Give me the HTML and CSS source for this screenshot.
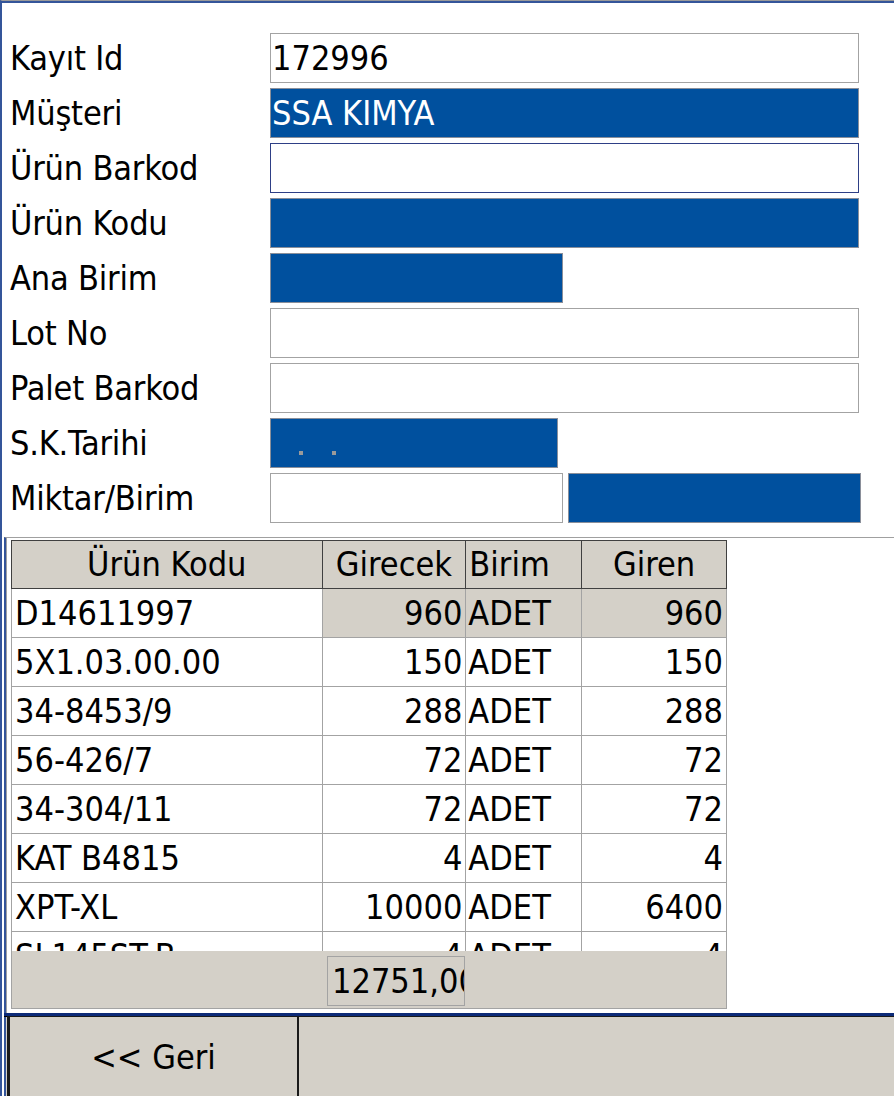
FILE: index.html
```html
<!DOCTYPE html>
<html lang="tr">
<head>
<meta charset="utf-8">
<title>Mal Kabul</title>
<link rel="stylesheet" href="styles.css">
</head>
<body>
<div class="window">
  <div class="form">
    <div class="label">Kayıt Id</div>
    <div class="field"><div class="box full">172996</div></div>

    <div class="label">Müşteri</div>
    <div class="field"><div class="box full blue">SSA KIMYA</div></div>

    <div class="label">Ürün Barkod</div>
    <div class="field"><div class="box full focus"></div></div>

    <div class="label">Ürün Kodu</div>
    <div class="field"><div class="box full blue"></div></div>

    <div class="label">Ana Birim</div>
    <div class="field"><div class="box half blue"></div></div>

    <div class="label">Lot No</div>
    <div class="field"><div class="box full"></div></div>

    <div class="label">Palet Barkod</div>
    <div class="field"><div class="box full"></div></div>

    <div class="label">S.K.Tarihi</div>
    <div class="field"><div class="box date blue"><span class="dot"></span><span class="dot"></span></div></div>

    <div class="label">Miktar/Birim</div>
    <div class="field pair"><div class="box half"></div><div class="box half blue"></div></div>
  </div>

  <div class="grid-panel">
    <div class="grid">
      <div class="grid-head">
        <div class="hc c1 center">Ürün Kodu</div>
        <div class="hc c2 center">Girecek</div>
        <div class="hc c3">Birim</div>
        <div class="hc c4 center">Giren</div>
      </div>
      <div class="grid-body">
        <div class="row sel">
          <div class="cell c1">D14611997</div>
          <div class="cell c2 num">960</div>
          <div class="cell c3">ADET</div>
          <div class="cell c4 num">960</div>
        </div>
        <div class="row">
          <div class="cell c1">5X1.03.00.00</div>
          <div class="cell c2 num">150</div>
          <div class="cell c3">ADET</div>
          <div class="cell c4 num">150</div>
        </div>
        <div class="row">
          <div class="cell c1">34-8453/9</div>
          <div class="cell c2 num">288</div>
          <div class="cell c3">ADET</div>
          <div class="cell c4 num">288</div>
        </div>
        <div class="row">
          <div class="cell c1">56-426/7</div>
          <div class="cell c2 num">72</div>
          <div class="cell c3">ADET</div>
          <div class="cell c4 num">72</div>
        </div>
        <div class="row">
          <div class="cell c1">34-304/11</div>
          <div class="cell c2 num">72</div>
          <div class="cell c3">ADET</div>
          <div class="cell c4 num">72</div>
        </div>
        <div class="row">
          <div class="cell c1">KAT B4815</div>
          <div class="cell c2 num">4</div>
          <div class="cell c3">ADET</div>
          <div class="cell c4 num">4</div>
        </div>
        <div class="row">
          <div class="cell c1">XPT-XL</div>
          <div class="cell c2 num">10000</div>
          <div class="cell c3">ADET</div>
          <div class="cell c4 num">6400</div>
        </div>
        <div class="row">
          <div class="cell c1">SL145ST-B</div>
          <div class="cell c2 num">4</div>
          <div class="cell c3">ADET</div>
          <div class="cell c4 num">4</div>
        </div>
      </div>
      <div class="grid-foot">
        <div class="total">12751,00</div>
      </div>
    </div>
  </div>

  <div class="buttons">
    <div class="btn">&lt;&lt; Geri</div>
    <div class="btn-rest"></div>
  </div>
</div>
</body>
</html>
```

FILE: styles.css
```css
html, body {
  margin: 0;
  padding: 0;
  background: #ffffff;
}

body {
  width: 894px;
  height: 1096px;
  overflow: hidden;
  font-family: "DejaVu Sans Condensed", "DejaVu Sans", sans-serif;
  font-size: 34px;
  color: #000000;
}

.window {
  height: 1096px;
  box-sizing: border-box;
  border-top: 1px solid #9a9a9a;
  border-left: 2px solid #34559a;
  box-shadow: inset 0 2px 0 #34559a;
  display: flex;
  flex-direction: column;
}

/* ---------- form ---------- */
.form {
  display: grid;
  grid-template-columns: 268px 1fr;
  grid-auto-rows: 50px;
  row-gap: 5px;
  padding-top: 32px;
}

.label {
  padding-left: 8px;
  line-height: 50px;
  white-space: nowrap;
  letter-spacing: -0.2px;
}

.field {
  display: flex;
  gap: 5px;
}

.box {
  box-sizing: border-box;
  height: 50px;
  border: 1px solid #a3a3a3;
  background: #ffffff;
  line-height: 48px;
  padding-left: 1px;
  white-space: nowrap;
  overflow: hidden;
}

.box.full { width: 589px; }
.box.half { width: 293px; }
.box.date { width: 288px; }

.box.blue {
  background: #00509e;
  color: #ffffff;
  border-color: #8a8f9a;
}

.box.focus {
  border-color: #2e3f86;
}

.box.date {
  display: flex;
  align-items: flex-start;
  gap: 29px;
  padding-left: 28px;
  padding-top: 32px;
}

.dot {
  width: 4px;
  height: 4px;
  background: #9a9a9a;
}

/* ---------- grid ---------- */
.grid-panel {
  margin-top: 14px;
  margin-left: 2px;
  border-top: 1px solid #a0a0a0;
  border-left: 2px solid #34559a;
  padding: 2px 0 4px 5px;
  box-shadow: inset 1px 0 0 #a0a0a0;
}

.grid {
  width: 716px;
}

.grid-head {
  display: flex;
  height: 49px;
  box-sizing: border-box;
  background: #d4d0c8;
  border-top: 1px solid #404040;
  border-left: 1px solid #404040;
  border-bottom: 1px solid #404040;
}

.hc {
  box-sizing: border-box;
  border-right: 1px solid #404040;
  line-height: 47px;
  padding-left: 3px;
  white-space: nowrap;
}

.center { text-align: center; padding-left: 0; }

.c1 { width: 311px; }
.c2 { width: 144px; }
.c3 { width: 116px; }
.c4 { width: 145px; }

.grid-body {
  height: 362px;
  overflow: hidden;
  background: #ffffff;
}

.row {
  display: flex;
  height: 49px;
  box-sizing: border-box;
  border-bottom: 1px solid #a3a3a3;
  border-left: 1px solid #a3a3a3;
}

.cell {
  box-sizing: border-box;
  border-right: 1px solid #a3a3a3;
  line-height: 48px;
  padding-left: 2px;
  padding-right: 3px;
  white-space: nowrap;
  overflow: hidden;
}

.cell.num { text-align: right; }
.cell.c1 { padding-left: 3px; }

.row.sel .c2,
.row.sel .c3,
.row.sel .c4 {
  background: #d4d0c8;
}

.grid-foot {
  height: 58px;
  box-sizing: border-box;
  background: #d4d0c8;
  border-right: 1px solid #a3a3a3;
  border-bottom: 1px solid #a3a3a3;
  border-left: 1px solid #a3a3a3;
  padding: 5px 0 0 315px;
}

.total {
  box-sizing: border-box;
  width: 138px;
  height: 50px;
  border: 1px solid #a3a3a3;
  line-height: 48px;
  padding-left: 4px;
  white-space: nowrap;
  overflow: hidden;
}

/* ---------- buttons ---------- */
.buttons {
  flex: 1;
  display: flex;
  margin-left: 2px;
  background: #d4d0c8;
  border-top: 3px solid #0c2a78;
  box-shadow: inset 0 1px 0 #000000, inset 2px 0 0 #34559a;
  padding-left: 3px;
}

.btn {
  box-sizing: border-box;
  width: 292px;
  border-left: 3px solid #1a1a1a;
  border-right: 2px solid #1a1a1a;
  border-top: 1px solid #1a1a1a;
  text-align: center;
  line-height: 80px;
}

.btn-rest {
  flex: 1;
  border-top: 1px solid #1a1a1a;
}
```
